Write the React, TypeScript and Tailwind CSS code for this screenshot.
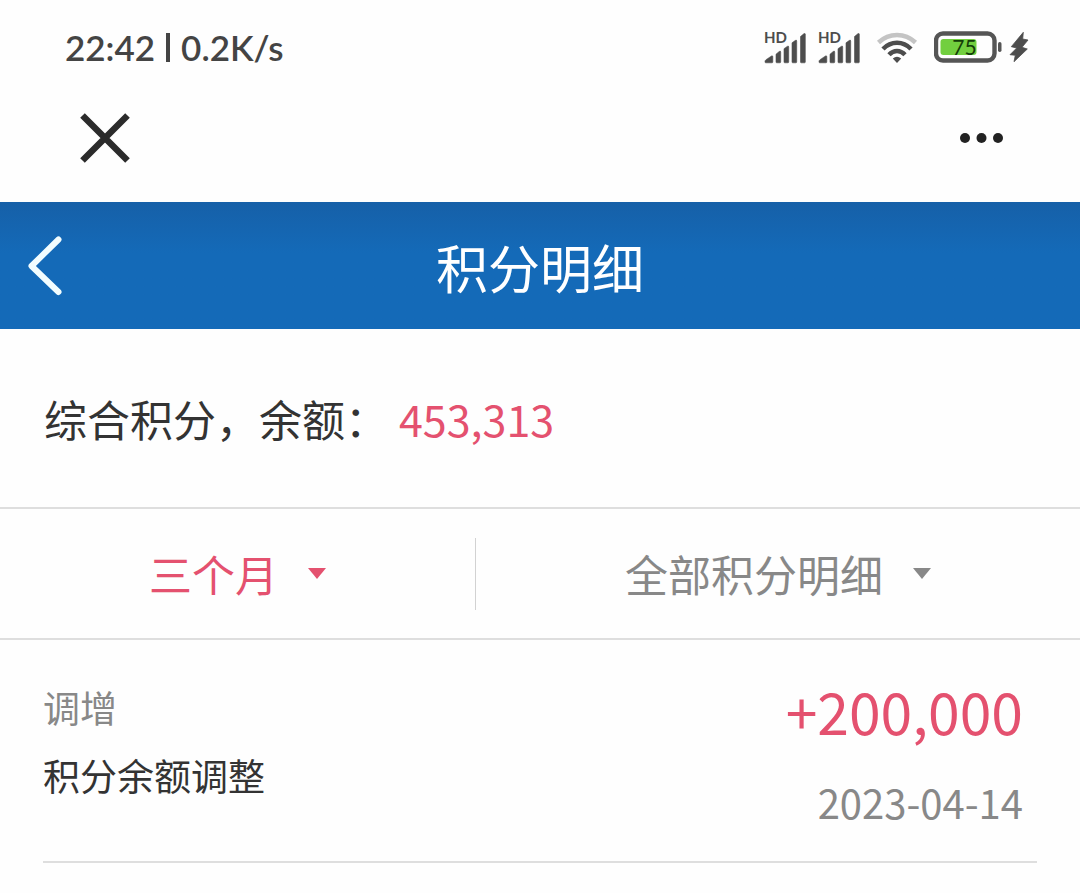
import React from "react";

const records = [
  { type: "调增", title: "积分余额调整", amount: "+200,000", date: "2023-04-14" },
];

function Signal() {
  return (
    <svg width="44" height="40" viewBox="0 -4 44 40" fill="#4d4d4d" aria-label="HD 信号" role="img">
      <text x="0" y="11" fontSize="15" fontWeight="700" fontFamily="Lato, sans-serif">HD</text>
      <g stroke="#4d4d4d" strokeWidth="0.600">
        <path d="M1 29.500q0-1 1-1.800l5.500-3.700q1.300-.5 1.300.8v5.200q0 .8-.8.800H1.800q-.8 0-.8-.8z" />
        <path d="M12 22.200l3.200-2.700q1.500-1 1.500.5v10q0 .8-.8.800h-3.100q-.8 0-.8-.8z" />
        <path d="M20 16.700l3.200-2.300q1.500-1 1.500.5V30q0 .8-.8.800h-3.100q-.8 0-.8-.8z" />
        <path d="M28 10.800l3.200-2.300q1.500-1 1.500.5V30q0 .8-.8.800h-3.100q-.8 0-.8-.8z" />
        <path d="M36.500 4.500l3.300-2.700q1.500-1 1.500.5V30q0 .8-.8.800h-3.200q-.8 0-.8-.8z" />
      </g>
    </svg>
  );
}

function Wifi() {
  return (
    <svg width="42" height="34" viewBox="0 0 42 34" fill="none" strokeWidth="4.500" aria-label="Wi-Fi" role="img">
      <path d="M2.500 11.500Q10.500 4 21 4t18.500 7.500" stroke="#c4c4c4" />
      <path d="M7 18Q13 11.800 21 11.800T35 18" stroke="#4d4d4d" />
      <path d="M13 23.800q3.500-3.800 8-3.800t8 3.800" stroke="#4d4d4d" />
      <path d="M16.800 27.500q4.200-3.500 8.400 0L21 32z" fill="#4d4d4d" />
    </svg>
  );
}

function Battery() {
  return (
    <svg width="96" height="34" viewBox="0 0 96 34" aria-label="电量 75%" role="img">
      <rect x="2" y="2.500" width="58.500" height="27" rx="7" fill="none" stroke="#555" strokeWidth="4.400" />
      <rect x="6.500" y="8" width="36" height="16" rx="3" fill="#72cf3f" />
      <text x="30.500" y="23.500" textAnchor="middle" fontSize="21" fontFamily="Lato, sans-serif" fontWeight="400" fill="#123d08">75</text>
      <rect x="64" y="11" width="3.500" height="10" rx="1.700" fill="#555" />
      <path d="M89.300 1.300L77.300 15.700 82.700 17 76 23.700 81.300 24.300 80 30.700 93.300 18 88 16.300 94 9 88.700 8z" fill="#4d4d4d" stroke="#4d4d4d" strokeWidth="0.800" strokeLinejoin="round" />
    </svg>
  );
}

function Filter({ label, options, tone }: { label: string; options: string[]; tone: string }) {
  return (
    <label className={`flex items-center justify-center gap-[30px] pb-px ${tone}`}>
      <select
        aria-label={label}
        className="appearance-none bg-transparent text-[43px] leading-[64px] outline-none field-sizing-content"
      >
        {options.map((o) => (
          <option key={o}>{o}</option>
        ))}
      </select>
      <svg width="18" height="11" viewBox="0 0 18 11" fill="currentColor" aria-hidden="true">
        <path d="M0 0h18L9 11z" />
      </svg>
    </label>
  );
}

export default function App() {
  return (
    <div className="min-h-screen bg-[#fefefe] font-['Noto_Sans_CJK_SC',sans-serif] text-[#333]">
      <div className="flex h-24 items-center justify-between pr-[50px] pl-[65px]">
        <div className="flex items-center gap-[11px] pb-0.5 font-['Lato',sans-serif] text-[35px] leading-10 font-semibold text-[#444]">
          <span>22:42</span>
          <span className="h-[29px] w-1 bg-[#444]" />
          <span>0.2K/s</span>
        </div>
        <div className="flex items-center gap-[10px]">
          <Signal />
          <Signal />
          <div className="flex items-center gap-4 pl-1">
            <Wifi />
            <Battery />
          </div>
        </div>
      </div>

      <div className="flex h-[106px] items-start justify-between px-[76px] pt-3">
        <button type="button" aria-label="关闭">
          <svg width="58" height="60" viewBox="0 0 58 60" fill="none" stroke="#2b2b2b" strokeWidth="6.500">
            <path d="M6.500 7.500l45 45M51.500 7.500l-45 45" />
          </svg>
        </button>
        <button type="button" aria-label="更多">
          <svg width="46" height="60" viewBox="0 0 46 60" fill="#222">
            <circle cx="7" cy="30" r="5" />
            <circle cx="23.500" cy="30" r="5" />
            <circle cx="40" cy="30" r="5" />
          </svg>
        </button>
      </div>

      <header className="grid h-[127px] grid-cols-[1fr_auto_1fr] items-center bg-linear-to-b from-[#1660a8] to-[#146ab8] to-40% px-7 text-white">
        <button type="button" aria-label="返回" className="justify-self-start">
          <svg width="36" height="60" viewBox="0 0 36 60" fill="none" stroke="#f2fdff" strokeWidth="6" strokeLinecap="round" strokeLinejoin="round">
            <path d="M30.500 3.500L3.500 30l27 26" />
          </svg>
        </button>
        <h1 className="pt-0.5 text-[52px] leading-[76px]">积分明细</h1>
      </header>

      <main>
        <section className="flex h-[180px] items-center border-b-2 border-[#dedede] px-11 text-[43px] leading-[64px]">
          <span>综合积分，余额：</span>
          <span className="pl-[11px] text-[#e4516f]">453,313</span>
        </section>

        <section className="grid h-[131px] grid-cols-[44fr_56fr] border-b-2 border-[#dedede]">
          <div className="flex items-center justify-center">
            <Filter label="时间范围" options={["三个月"]} tone="text-[#e4516f]" />
          </div>
          <div className="flex items-center">
            <span className="h-[72px] w-px bg-[#d2d2d2]" />
            <div className="flex flex-1 justify-center">
              <Filter label="积分类型" options={["全部积分明细"]} tone="text-[#888]" />
            </div>
          </div>
        </section>

        <ul className="px-[43px]">
          {records.map((r) => (
            <li key={r.date} className="flex h-[223px] justify-between border-b-2 border-[#dedede] pt-7 pr-[14px]">
              <div className="flex flex-col pt-[5px] text-[37px] leading-[68px]">
                <span className="text-[#888]">{r.type}</span>
                <span>{r.title}</span>
              </div>
              <div className="flex flex-col items-end">
                <span className="text-[57px] leading-[84px] text-[#e4516f]">{r.amount}</span>
                <time dateTime={r.date} className="pt-[18px] text-[40px] leading-[64px] text-[#888]">{r.date}</time>
              </div>
            </li>
          ))}
        </ul>
      </main>
    </div>
  );
}
